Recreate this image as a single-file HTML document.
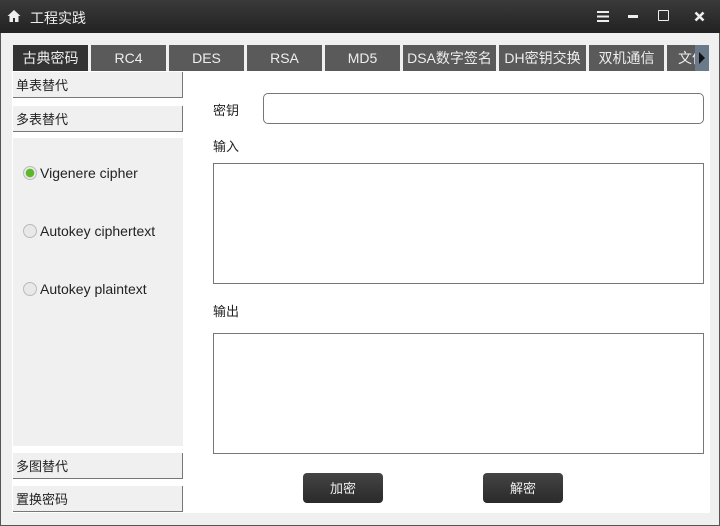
<!DOCTYPE html>
<html><head><meta charset="utf-8"><style>
*{margin:0;padding:0;box-sizing:border-box}
body{width:720px;height:526px;background:#f0f0f0;font-family:"Liberation Sans","Noto Sans CJK SC",sans-serif;font-size:13px;color:#222;position:relative;overflow:hidden}
.abs{position:absolute}
#title{left:0;top:0;width:720px;height:33px;background:linear-gradient(#3a3a3a,#222);color:#eee}
#frame{left:0;top:33px;width:720px;height:493px;border:1px solid #555;border-top:none;background:#f0f0f0}
.tab{top:45px;height:26px;background:#5a5a5a;color:#eee;text-align:center;line-height:27px;font-size:14px;overflow:hidden;white-space:nowrap}
#content{left:12px;top:71px;width:698px;height:442px;background:#fff}
.lb{left:13px;width:170px;height:26px;background:#f0f0f0;border-bottom:1px solid #777;border-right:1px solid #777;line-height:28px;padding-left:3px;font-size:13px}
.ta{left:213px;width:491px;border:1px solid #777;background:#fff}
.btn{top:473px;width:80px;height:30px;background:linear-gradient(#444,#2a2a2a);border-radius:4px;color:#eee;text-align:center;line-height:31px}
.radio{left:23px;width:14px;height:14px;border-radius:50%;border:1px solid #bbb;background:#e8e8e8}
.rl{left:40px;font-size:14px}
</style></head><body>
<div id="frame" class="abs"></div>
<div id="title" class="abs">
 <svg class="abs" style="left:7px;top:9px" width="14" height="13" viewBox="0 0 14 13"><path d="M7 1L0.5 7h2v6h3.5v-4h2v4h3.5V7h2z" fill="#eee"/></svg>
 <span class="abs" style="left:30px;top:8px;font-size:14px">工程实践</span>
 <svg class="abs" style="left:597px;top:11px" width="12" height="11"><rect y="0" width="12" height="2" fill="#eee"/><rect y="4.5" width="12" height="2" fill="#eee"/><rect y="9" width="12" height="2" fill="#eee"/></svg>
 <div class="abs" style="left:628px;top:15px;width:10px;height:3px;background:#eee"></div>
 <div class="abs" style="left:658px;top:10px;width:11px;height:11px;border:1.5px solid #eee;border-radius:1px"></div>
 <svg class="abs" style="left:694px;top:11px" width="11" height="11"><path d="M1.5 1.5L9.5 9.5M9.5 1.5L1.5 9.5" stroke="#eee" stroke-width="2.6"/></svg>
</div>
<div id="content" class="abs"></div>
<div class="tab abs" style="left:13px;width:75px;background:#333">古典密码</div>
<div class="tab abs" style="left:91px;width:75px">RC4</div>
<div class="tab abs" style="left:169px;width:75px">DES</div>
<div class="tab abs" style="left:247px;width:75px">RSA</div>
<div class="tab abs" style="left:325px;width:75px">MD5</div>
<div class="tab abs" style="left:403px;width:93px">DSA数字签名</div>
<div class="tab abs" style="left:499px;width:87px">DH密钥交换</div>
<div class="tab abs" style="left:589px;width:75px">双机通信</div>
<div class="tab abs" style="left:667px;width:28px;text-align:left;padding-left:11px">文件</div>
<div class="abs" style="left:695px;top:45px;width:14px;height:26px;background:#6a7a8a"></div>
<svg class="abs" style="left:698px;top:52px" width="8" height="12"><path d="M1 0L7 6L1 12z" fill="#111"/></svg>

<div class="lb abs" style="top:72px">单表替代</div>
<div class="lb abs" style="top:106px">多表替代</div>
<div class="abs" style="left:13px;top:138px;width:170px;height:308px;background:#f0f0f0"></div>
<div class="radio abs" style="top:166px;background:radial-gradient(circle,#5cb82a 0 4px,#e8e8e8 4.5px)"></div>
<div class="rl abs" style="top:165px">Vigenere cipher</div>
<div class="radio abs" style="top:224px"></div>
<div class="rl abs" style="top:223px">Autokey ciphertext</div>
<div class="radio abs" style="top:282px"></div>
<div class="rl abs" style="top:281px">Autokey plaintext</div>
<div class="lb abs" style="top:453px">多图替代</div>
<div class="lb abs" style="top:486px">置换密码</div>

<div class="abs" style="left:213px;top:100px">密钥</div>
<div class="abs" style="left:263px;top:93px;width:441px;height:31px;border:1px solid #777;border-radius:5px;background:#fff"></div>
<div class="abs" style="left:213px;top:136px">输入</div>
<div class="ta abs" style="top:163px;height:121px"></div>
<div class="abs" style="left:213px;top:301px">输出</div>
<div class="ta abs" style="top:333px;height:121px"></div>
<div class="btn abs" style="left:303px">加密</div>
<div class="btn abs" style="left:483px">解密</div>
</body></html>
